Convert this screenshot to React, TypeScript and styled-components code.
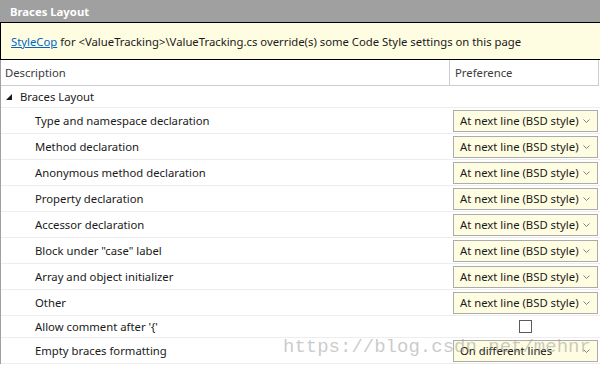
import React from "react";
import styled, { createGlobalStyle } from "styled-components";

const GlobalStyle = createGlobalStyle`
  html, body {
    margin: 0;
    padding: 0;
    background: #ffffff;
  }
  body {
    font-family: "Noto Sans", "Open Sans", sans-serif;
    font-size: 11.3px;
    color: #1a1a1a;
  }
`;

type Setting = {
  label: string;
  kind: "select" | "check";
  value?: string;
};

const settings: Setting[] = [
  { label: "Type and namespace declaration", kind: "select", value: "At next line (BSD style)" },
  { label: "Method declaration", kind: "select", value: "At next line (BSD style)" },
  { label: "Anonymous method declaration", kind: "select", value: "At next line (BSD style)" },
  { label: "Property declaration", kind: "select", value: "At next line (BSD style)" },
  { label: "Accessor declaration", kind: "select", value: "At next line (BSD style)" },
  { label: 'Block under "case" label', kind: "select", value: "At next line (BSD style)" },
  { label: "Array and object initializer", kind: "select", value: "At next line (BSD style)" },
  { label: "Other", kind: "select", value: "At next line (BSD style)" },
  { label: "Allow comment after '{'", kind: "check" },
  { label: "Empty braces formatting", kind: "select", value: "On different lines" },
];

export default function App() {
  return (
    <>
      <GlobalStyle />
      <Panel>
        <TitleBar>Braces Layout</TitleBar>
        <Banner>
          <Link>StyleCop</Link>
          &nbsp;for &lt;ValueTracking&gt;\ValueTracking.cs override(s) some Code Style settings on this page
        </Banner>
        <Table>
          <HeaderRow>
            <HeaderCell>Description</HeaderCell>
            <HeaderCell $divider>Preference</HeaderCell>
          </HeaderRow>
          <GroupRow>
            <Triangle />
            Braces Layout
          </GroupRow>
          {settings.map((s) => (
            <Row key={s.label} $short={s.kind === "check"}>
              <Label>{s.label}</Label>
              <ValueCell>
                {s.kind === "select" ? (
                  <Select>
                    <span>{s.value}</span>
                    <Chevron viewBox="0 0 7 4">
                      <path d="M0.5 0.5 L3.5 3.5 L6.5 0.5" fill="none" stroke="#808080" strokeWidth="1" />
                    </Chevron>
                  </Select>
                ) : (
                  <CheckBox />
                )}
              </ValueCell>
            </Row>
          ))}
        </Table>
        <Watermark>https://blog.csdn.net/mehnr</Watermark>
      </Panel>
    </>
  );
}

const Panel = styled.div`
  position: relative;
  width: 600px;
  height: 372px;
  overflow: hidden;
  background: #ffffff;
`;

const TitleBar = styled.div`
  height: 22px;
  display: flex;
  align-items: center;
  padding-left: 10px;
  background: #a0a0a0;
  color: #ffffff;
  font-weight: bold;
  font-size: 11.3px;
`;

const Banner = styled.div`
  height: 36px;
  display: flex;
  align-items: center;
  padding-left: 10px;
  background: #fffde1;
  border-top: 1px solid #000000;
  border-bottom: 1px solid #000000;
  border-left: 1px solid #000000;
  white-space: pre;
`;

const Link = styled.span`
  color: #0066cc;
  text-decoration: underline;
`;

const Table = styled.div`
  border-left: 1px solid #a0a0a0;
  display: flex;
  flex-direction: column;
`;

const HeaderRow = styled.div`
  display: grid;
  grid-template-columns: 448px 1fr;
  height: 25px;
  border-bottom: 1px solid #c8ccd4;
  border-right: 1px solid #c8ccd4;
  margin-right: 1px;
`;

const HeaderCell = styled.div<{ $divider?: boolean }>`
  display: flex;
  align-items: center;
  padding-left: ${(p) => (p.$divider ? "5px" : "4px")};
  border-left: ${(p) => (p.$divider ? "1px solid #c8ccd4" : "none")};
  color: #3c3c3c;
`;

const GroupRow = styled.div`
  height: 21px;
  display: flex;
  align-items: center;
  padding-left: 5px;
  border-bottom: 1px solid #ededed;
`;

const Triangle = styled.span`
  width: 0;
  height: 0;
  border-left: 6px solid transparent;
  border-bottom: 6px solid #1a1a1a;
  margin-right: 8px;
`;

const Row = styled.div<{ $short?: boolean }>`
  display: grid;
  grid-template-columns: 450px 1fr;
  height: ${(p) => (p.$short ? "21px" : "25px")};
  border-bottom: 1px solid #ededed;
`;

const Label = styled.div`
  display: flex;
  align-items: center;
  padding-left: 34px;
  white-space: nowrap;
`;

const ValueCell = styled.div`
  display: flex;
  align-items: center;
  justify-content: center;
  padding-right: 3px;
`;

const Select = styled.div`
  width: 145px;
  height: 22px;
  box-sizing: border-box;
  display: flex;
  align-items: center;
  justify-content: space-between;
  padding: 0 7px 0 6px;
  margin-left: 2px;
  background: #fffde1;
  border: 1px solid #acacac;
  white-space: nowrap;
`;

const Chevron = styled.svg`
  width: 7px;
  height: 4px;
  flex: none;
`;

const CheckBox = styled.span`
  width: 11px;
  height: 11px;
  border: 1px solid #5a5a5a;
  background: #ffffff;
  margin-left: 2px;
`;

const Watermark = styled.div`
  position: absolute;
  left: 283px;
  top: 336px;
  font-family: "Liberation Mono", monospace;
  font-size: 19px;
  color: rgba(150, 150, 150, 0.5);
  pointer-events: none;
`;
